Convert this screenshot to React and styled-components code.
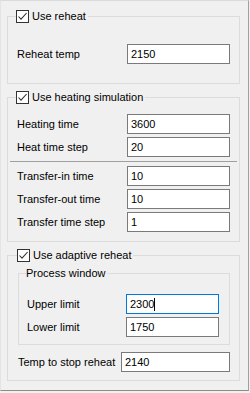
import React from 'react';
import styled, { createGlobalStyle } from 'styled-components';

const GlobalStyle = createGlobalStyle`
  html, body {
    margin: 0;
    padding: 0;
    background: #f0f0f0;
  }
  body {
    font-family: "Liberation Sans", Arial, sans-serif;
    font-size: 11px;
    color: #000;
  }
`;

const Window = styled.div`
  box-sizing: border-box;
  width: 249px;
  height: 391px;
  border-top: 1px solid #dadada;
  border-left: 1px solid #e4e4e4;
  border-right: 1px solid #a0a0a0;
  border-bottom: 1px solid #8c8c8c;
  padding: 8px 8px 0 6px;
  display: flex;
  flex-direction: column;
  gap: 6px;
`;

const Group = styled.fieldset`
  margin: 0;
  min-width: 0;
  border: 1px solid #dcdcdc;
  padding: ${p => p.$pad};
  display: flex;
  flex-direction: column;
  gap: ${p => p.$gap || 3}px;
`;

const Legend = styled.legend`
  display: flex;
  align-items: center;
  gap: 3px;
  height: 15px;
  line-height: 15px;
  padding: 0 2px 0 0;
  margin-left: -1px;
  white-space: nowrap;
`;

const Box = styled.span`
  box-sizing: border-box;
  width: 13px;
  height: 13px;
  border: 1px solid #333;
  background: #fff;
  display: flex;
  align-items: center;
  justify-content: center;
`;

const Row = styled.div`
  display: flex;
  align-items: center;
  justify-content: space-between;
  height: 20px;
`;

const Label = styled.span`
  white-space: nowrap;
`;

const TextBox = styled.div`
  box-sizing: border-box;
  width: ${p => p.$w}px;
  height: 20px;
  border: 1px solid ${p => (p.$focused ? '#0078d7' : '#7a7a7a')};
  background: #fff;
  padding: 0 3px;
  display: flex;
  align-items: center;
`;

const Caret = styled.span`
  width: 1px;
  height: 13px;
  background: #000;
`;

const Separator = styled.div`
  height: 1px;
  background: #a0a0a0;
  margin: 1px -7px;
`;

const Check = ({ label }) => (
  <Legend>
    <Box>
      <svg width="11" height="11" viewBox="0 0 11 11">
        <path d="M1.5 5.5 L4 8.2 L9.6 2" fill="none" stroke="#333" strokeWidth="1.1" />
      </svg>
    </Box>
    {label}
  </Legend>
);

const Field = ({ label, value, w = 103, focused }) => (
  <Row>
    <Label>{label}</Label>
    <TextBox $w={w} $focused={focused}>
      {value}
      {focused && <Caret />}
    </TextBox>
  </Row>
);

export default function App() {
  return (
    <>
      <GlobalStyle />
      <Window>
        <Group $pad="20px 9px 19px 9px">
          <Check label="Use reheat" />
          <Field label="Reheat temp" value="2150" />
        </Group>

        <Group $pad="9px 9px 9px 9px">
          <Check label="Use heating simulation" />
          <Field label="Heating time" value="3600" />
          <Field label="Heat time step" value="20" />
          <Separator />
          <Field label="Transfer-in time" value="10" />
          <Field label="Transfer-out time" value="10" />
          <Field label="Transfer time step" value="1" />
        </Group>

        <Group $pad="3px 9px 8px 10px" $gap={7}>
          <Check label="Use adaptive reheat" />
          <Group $pad="13px 10px 7px 8px">
            <Legend>Process window</Legend>
            <Field label="Upper limit" value="2300" w={93} focused />
            <Field label="Lower limit" value="1750" w={93} />
          </Group>
          <Field label="Temp to stop reheat" value="2140" w={109} />
        </Group>
      </Window>
    </>
  );
}
